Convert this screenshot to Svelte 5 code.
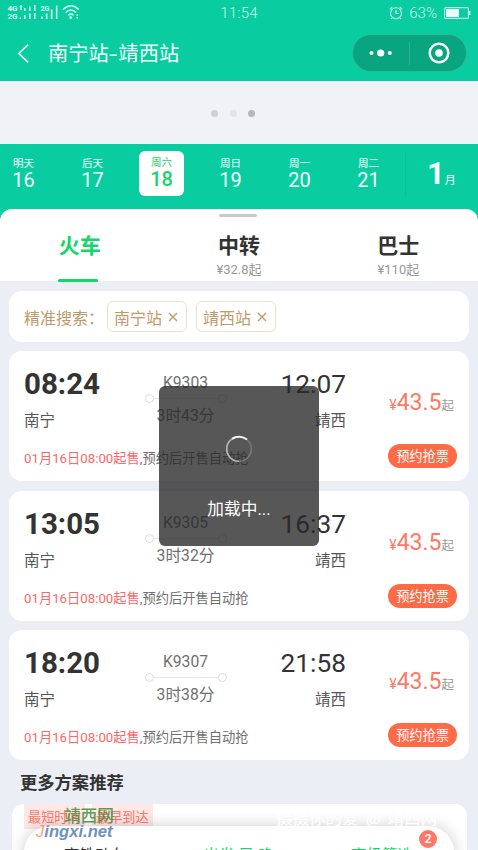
<script>
  const dates = [
    { label: "明天", day: 16 },
    { label: "后天", day: 17 },
    { label: "周六", day: 18 },
    { label: "周日", day: 19 },
    { label: "周一", day: 20 },
    { label: "周二", day: 21 }
  ];

  const tabs = [
    { name: "火车", price: "" },
    { name: "中转", price: "¥32.8起" },
    { name: "巴士", price: "¥110起" }
  ];

  const trains = [
    { start: "08:24", end: "12:07", code: "K9303", time: "3时43分" },
    { start: "13:05", end: "16:37", code: "K9305", time: "3时32分" },
    { start: "18:20", end: "21:58", code: "K9307", time: "3时38分" }
  ];

  let selectedDay = $state(18);
  let activeTab = $state("火车");
  let stations = $state(["南宁站", "靖西站"]);
  let loading = $state(true);

  function removeStation(name) {
    stations = stations.filter((s) => s !== name);
  }
</script>

<main class="phone">
  <!-- Status bar -->
  <div class="status">
    <svg class="signals" width="74" height="18" viewBox="0 0 74 18">
      <g fill="#d9fff3" font-family="Roboto, sans-serif" font-weight="700">
        <text x="0.500" y="7" font-size="8">4G</text>
        <text x="0.500" y="15" font-size="8">2G</text>
        <text x="33.500" y="6.500" font-size="7">2G</text>
      </g>
      <g fill="#c5f7e8">
        <path d="M12.500 2h3v1.200h-3zM13.300 1h1.400v5h-1.400zM12.500 13.500H14V15h-1.500z" />
        <path d="M17 4h1.600v3H17zM17 11h1.600v4H17zM22 2.500h1.600V7H22zM22 9.500h1.600V15H22zM27 1h1.600v6H27zM27 9h1.600v6H27z" />
        <path d="M34 12.500h1.800V15H34zM38.800 9.500h1.700V15h-1.700zM43.800 5.500h1.700V15h-1.700zM48.900 1.500h1.600V15h-1.600z" />
      </g>
      <g fill="none" stroke="#d9fff3" stroke-width="1.500">
        <path d="M56 5.500c5-5 11-5 15.500 0M58.700 8.500c3.500-3.300 7-3.300 10.300 0M61.200 11.300c2-1.700 3.500-1.700 5.200 0" />
      </g>
      <circle cx="63.700" cy="13.600" r="1.400" fill="#d9fff3" />
      <path d="M69.500 10.500H71V12h-1.500zM69.500 13H71v1.500h-1.500z" fill="#d9fff3" />
    </svg>
    <span class="clock">11:54</span>
    <div class="power">
      <svg width="14" height="14" viewBox="0 0 14 14" fill="none" stroke="#c8f6e8" stroke-width="1.100">
        <circle cx="7" cy="7.200" r="5.500" />
        <path d="M7 4v3.500h2.700M.8 3.300L3.300.8M13.200 3.300L10.700.8M3 12l-1 1M11 12l1 1" />
      </svg>
      <span>63%</span>
      <svg class="battery" width="27" height="12" viewBox="0 0 27 12">
        <rect x=".6" y=".6" width="23.800" height="10.800" rx="1" fill="none" stroke="#b5f2e0" stroke-width="1.100" />
        <rect x="2" y="2" width="13" height="8" fill="#e9fbf6" />
        <path d="M25 4h1.500v4H25z" fill="#b5f2e0" />
      </svg>
    </div>
  </div>

  <!-- Navigation -->
  <header class="nav">
    <svg class="back" width="13" height="21" viewBox="0 0 14 22" fill="none" stroke="#e8fff8" stroke-width="1.800">
      <path d="M12 1.500L2 11l10 9.500" />
    </svg>
    <h1>南宁站<span>-</span>靖西站</h1>
    <div class="capsule">
      <svg width="24" height="8" viewBox="0 0 24 8" fill="#fff">
        <circle cx="2.500" cy="4" r="2" /><circle cx="11.700" cy="4" r="3.600" /><circle cx="20.800" cy="4" r="2" />
      </svg>
      <i></i>
      <svg width="22" height="22" viewBox="0 0 22 22">
        <circle cx="11" cy="11" r="9.300" fill="none" stroke="#fff" stroke-width="2.500" />
        <circle cx="11" cy="11" r="3.800" fill="#fff" />
      </svg>
    </div>
  </header>

  <div class="banner"><i></i><i></i><i></i></div>

  <!-- Dates -->
  <div class="dates">
    {#each dates as date}
      <button class="date" class:selected={date.day === selectedDay} onclick={() => (selectedDay = date.day)}>
        <span>{date.label}</span>
        <b>{date.day}</b>
      </button>
    {/each}
    <div class="month"><b>1</b><span>月</span></div>
  </div>

  <section class="tabs">
    <div class="handle"></div>
    {#each tabs as tab}
      <button class="tab" class:active={tab.name === activeTab} onclick={() => (activeTab = tab.name)}>
        <strong>{tab.name}</strong>
        {#if tab.price}<small>{tab.price}</small>{/if}
      </button>
    {/each}
  </section>

  <div class="content">
    <section class="search">
      <span class="search-label">精准搜索：</span>
      {#each stations as station}
        <button class="chip" onclick={() => removeStation(station)}>
          {station}
          <svg width="10" height="10" viewBox="0 0 10 10" stroke="#c09a6b" stroke-width="1.400">
            <path d="M1 1l8 8M9 1L1 9" />
          </svg>
        </button>
      {/each}
    </section>

    {#each trains as train}
      <article class="train">
        <div class="from">
          <strong>{train.start}</strong>
          <span>南宁</span>
        </div>
        <div class="trip">
          <span>{train.code}</span>
          <div class="line"><i></i><i></i></div>
          <span>{train.time}</span>
        </div>
        <div class="to">
          <strong>{train.end}</strong>
          <span>靖西</span>
        </div>
        <p class="price"><small>¥</small>43.5<em>起</em></p>
        <p class="notice"><span>01月16日08:00起售</span>,预约后开售自动抢</p>
        <button class="book">预约抢票</button>
      </article>
    {/each}

    <h2>更多方案推荐</h2>
    <section class="more">
      <span class="tag">最短时间</span>
      <span class="tag">最早到达</span>
    </section>
  </div>

  <!-- Floating filter bar -->
  <div class="filter">
    <span>高铁动车</span>
    <span class="green">出发 早-晚</span>
    <span class="green">高级筛选</span>
    <b class="badge">2</b>
  </div>

  <div class="site-mark">
    <span>靖西网</span>
    <b><i>J</i>ingxi.net</b>
  </div>
  <div class="photo-mark">摄摄你的爱 @ 靖西网</div>

  {#if loading}
    <div class="loading">
      <svg width="28" height="28" viewBox="0 0 28 28" fill="none" stroke-width="1.600">
        <circle cx="14" cy="14" r="12.300" stroke="#777" />
        <path d="M14 26.300A12.300 12.300 0 0 1 14 1.700" stroke="#b5b5b5" />
        <path d="M7 3.900A12.300 12.300 0 0 1 22 4.600" stroke="#f2f2f2" stroke-width="2" />
      </svg>
      <span>加载中...</span>
    </div>
  {/if}
</main>

<style>
  .phone {
    position: relative;
    width: 478px;
    height: 850px;
    overflow: hidden;
    background: #ebeef4;
    color: #333;
    font-family: Roboto, "Noto Sans CJK SC", sans-serif;
  }

  .phone * {
    box-sizing: border-box;
  }

  button {
    border: none;
    background: none;
    padding: 0;
    margin: 0;
    font: inherit;
    color: inherit;
  }

  p,
  h1,
  h2 {
    margin: 0;
  }

  .status {
    height: 27px;
    background: #09cda0;
    display: grid;
    grid-template-columns: 1fr auto 1fr;
    align-items: center;
    padding: 0 7px 1px 7px;
    color: #c8f6e8;
    font-size: 15px;
  }

  .clock {
    font-weight: 300;
    font-size: 15px;
    letter-spacing: 0.2px;
  }

  .power {
    display: flex;
    justify-content: flex-end;
    align-items: center;
    font-weight: 300;
  }

  .power span {
    margin: 0 7px 0 6px;
  }

  .nav {
    height: 54px;
    background: #09cda0;
    display: flex;
    align-items: center;
    padding: 0 11px 0 17px;
    color: #f3fffb;
  }

  .back {
    margin-bottom: 2px;
  }

  .nav h1 {
    flex: 1;
    margin-left: 18px;
    font-size: 20.300px;
    line-height: 28px;
    font-weight: 400;
  }

  .nav h1 span {
    display: inline-block;
    width: 9.500px;
    transform: scaleX(1.450);
    transform-origin: left;
  }

  .capsule {
    width: 115px;
    height: 38px;
    margin-bottom: 2px;
    border: 1px solid #35b794;
    border-radius: 19px;
    background: #08a580;
    display: flex;
    align-items: center;
    padding: 0 16px;
  }

  .capsule i {
    flex: none;
    width: 1px;
    height: 23px;
    margin: 0 18px 0 16px;
    background: #2db492;
  }

  .capsule svg {
    flex: none;
  }

  .banner {
    height: 63px;
    background: #f0f2f8;
    display: flex;
    justify-content: center;
    gap: 11.500px;
    padding: 29px 12px 0 0;
  }

  .banner i {
    width: 7px;
    height: 7px;
    border-radius: 50%;
    background: #cfcfd0;
  }

  .banner i:nth-child(2) {
    background: #e3e4e6;
  }

  .banner i:nth-child(3) {
    background: #b6b7b9;
  }

  .dates {
    height: 80px;
    background: #09cda0;
    display: flex;
    align-items: flex-start;
    gap: 24px;
    padding: 7px 0 0 1px;
    color: #f3fffb;
  }

  .date {
    width: 45px;
    height: 45px;
    border-radius: 6px;
    display: flex;
    flex-direction: column;
    align-items: center;
    padding-top: 6px;
  }

  .date span {
    font-size: 10.500px;
    line-height: 13px;
  }

  .date b {
    font-size: 20px;
    line-height: 20px;
    font-weight: 400;
  }

  .date.selected {
    background: #fff;
    color: #16d56b;
    padding-top: 5px;
  }

  .date.selected b {
    font-weight: 500;
  }

  .month {
    align-self: flex-start;
    height: 46px;
    margin-left: -10px;
    padding: 0 0 0 21px;
    border-left: 1px solid #07c197;
    display: flex;
    align-items: baseline;
  }

  .month b {
    font-size: 31px;
    line-height: 46px;
    font-weight: 700;
  }

  .month span {
    font-size: 11px;
    line-height: 14px;
  }

  .tabs {
    position: relative;
    height: 72px;
    margin-top: -15px;
    background: #fff;
    border-radius: 12px 12px 0 0;
    display: flex;
  }

  .handle {
    position: absolute;
    top: 5px;
    left: 219px;
    width: 38px;
    height: 3px;
    border-radius: 2px;
    background: #c9c9c9;
  }

  .tab {
    position: relative;
    flex: 1;
    display: flex;
    flex-direction: column;
    align-items: center;
    padding-top: 23px;
  }

  .tab strong {
    font-size: 21px;
    line-height: 28px;
    font-weight: 600;
  }

  .tab small {
    font-size: 13px;
    line-height: 20px;
    color: #999;
  }

  .tab.active {
    color: #16d56b;
  }

  .tab.active::after {
    content: "";
    position: absolute;
    left: 58px;
    bottom: -1px;
    width: 40px;
    height: 3px;
    border-radius: 2px;
    background: #16d56b;
  }

  .content {
    padding: 10px 9px 0;
  }

  .search {
    height: 51px;
    border-radius: 13px;
    background: #fff;
    display: flex;
    align-items: center;
    padding: 0 15px;
    color: #c09a6b;
    font-size: 16px;
  }

  .search-label {
    width: 83px;
    white-space: nowrap;
  }

  .chip {
    height: 31px;
    width: 80px;
    margin-right: 9px;
    padding-right: 2px;
    border: 1px solid #ecdfd0;
    border-radius: 6px;
    display: flex;
    align-items: center;
    justify-content: center;
    gap: 6px;
    white-space: nowrap;
  }

  .train {
    height: 130px;
    margin-top: 9px;
    margin-bottom: 9.500px;
    border-radius: 13px;
    background: #fff;
    display: grid;
    grid-template-columns: 123px 78px 1fr 110px;
    grid-template-rows: 91px 39px;
    padding: 0 12px 0 15px;
  }

  .train + .train {
    margin-top: 0;
  }

  .from,
  .to {
    display: flex;
    flex-direction: column;
    padding-top: 16px;
  }

  .from strong {
    font-size: 29.500px;
    line-height: 34px;
    font-weight: 700;
  }

  .from span,
  .to span {
    margin-top: 9px;
    font-size: 15.500px;
    line-height: 22px;
    color: #555;
  }

  .to {
    align-items: flex-end;
    padding-right: 1px;
  }

  .to strong {
    font-size: 26.300px;
    line-height: 34px;
    font-weight: 400;
  }

  .trip {
    display: flex;
    flex-direction: column;
    align-items: center;
    padding: 22px 1px 0 0;
    font-size: 15.700px;
    line-height: 20px;
    color: #707070;
  }

  .trip .line {
    width: 82px;
    height: 9px;
    margin: 1px -3px 3px -2px;
    display: flex;
    justify-content: space-between;
    background: linear-gradient(#e4e4e4, #e4e4e4) center / 66px 1px no-repeat;
  }

  .trip .line i {
    width: 9px;
    height: 9px;
    border: 1px solid #dcdcdc;
    border-radius: 50%;
  }

  .price {
    text-align: right;
    padding: 38px 3px 0 0;
    font-size: 23px;
    line-height: 28px;
    color: #ff7865;
    white-space: nowrap;
  }

  .price small {
    font-size: 14px;
  }

  .price em {
    font-size: 12.500px;
    font-style: normal;
    color: #999;
  }

  .notice {
    grid-column: 1 / 4;
    padding-top: 7px;
    font-size: 13.250px;
    line-height: 20px;
    color: #707070;
  }

  .notice span {
    color: #fd6868;
  }

  .book {
    justify-self: end;
    width: 69px;
    height: 24px;
    margin-top: 2px;
    border-radius: 12px;
    background: #ff6b47;
    color: #fff;
    font-size: 13.200px;
    line-height: 25px;
  }

  h2 {
    margin: 0 0 8.500px 11px;
    font-size: 17.300px;
    line-height: 26px;
    font-weight: 600;
  }

  .more {
    height: 70px;
    margin: 0 2px 0 3px;
    border-radius: 12px;
    background: #fff;
    display: flex;
    gap: 7px;
    padding-left: 12px;
  }

  .tag {
    height: 25px;
    width: 61px;
    padding-left: 4px;
    background: #ffe8e7;
    color: #ff7865;
    font-size: 13.200px;
    line-height: 27px;
    white-space: nowrap;
  }

  .filter {
    position: absolute;
    left: 24px;
    top: 826px;
    width: 430px;
    height: 52px;
    border-radius: 26px;
    background: #fff;
    box-shadow: 0 0 16px rgba(0, 0, 0, 0.2);
    display: flex;
    justify-content: space-between;
    padding: 20px 41px 0 40px;
    font-size: 15.500px;
    line-height: 20px;
  }

  .green {
    color: #16d56b;
  }

  .badge {
    position: absolute;
    top: 4px;
    right: 17px;
    width: 18px;
    height: 18px;
    border-radius: 50%;
    background: #ff7865;
    color: #fff;
    font-size: 12.500px;
    line-height: 18px;
    text-align: center;
    font-weight: 500;
  }

  .site-mark {
    position: absolute;
    left: 36px;
    top: 806px;
    width: 78px;
  }

  .site-mark span {
    display: block;
    text-align: right;
    font-size: 16.700px;
    line-height: 22px;
    font-weight: 500;
    color: rgba(65, 140, 60, 0.85);
  }

  .site-mark b {
    display: block;
    margin-top: -5px;
    font: italic 700 16.600px/18px "Liberation Sans", sans-serif;
    color: #6f92bd;
    white-space: nowrap;
  }

  .site-mark i {
    color: #f3a37c;
    font-weight: 400;
  }

  .photo-mark {
    position: absolute;
    left: 276px;
    top: 807px;
    font-size: 16.500px;
    line-height: 24px;
    word-spacing: 3px;
    color: #fff;
    white-space: nowrap;
  }

  .loading {
    position: absolute;
    left: 159px;
    top: 386px;
    width: 160px;
    height: 160px;
    border-radius: 6px;
    background: rgba(40, 40, 40, 0.78);
    display: flex;
    flex-direction: column;
    align-items: center;
    padding-top: 49px;
    color: #fff;
    font-size: 16.700px;
  }

  .loading span {
    margin-top: 35px;
    line-height: 24px;
  }
</style>
